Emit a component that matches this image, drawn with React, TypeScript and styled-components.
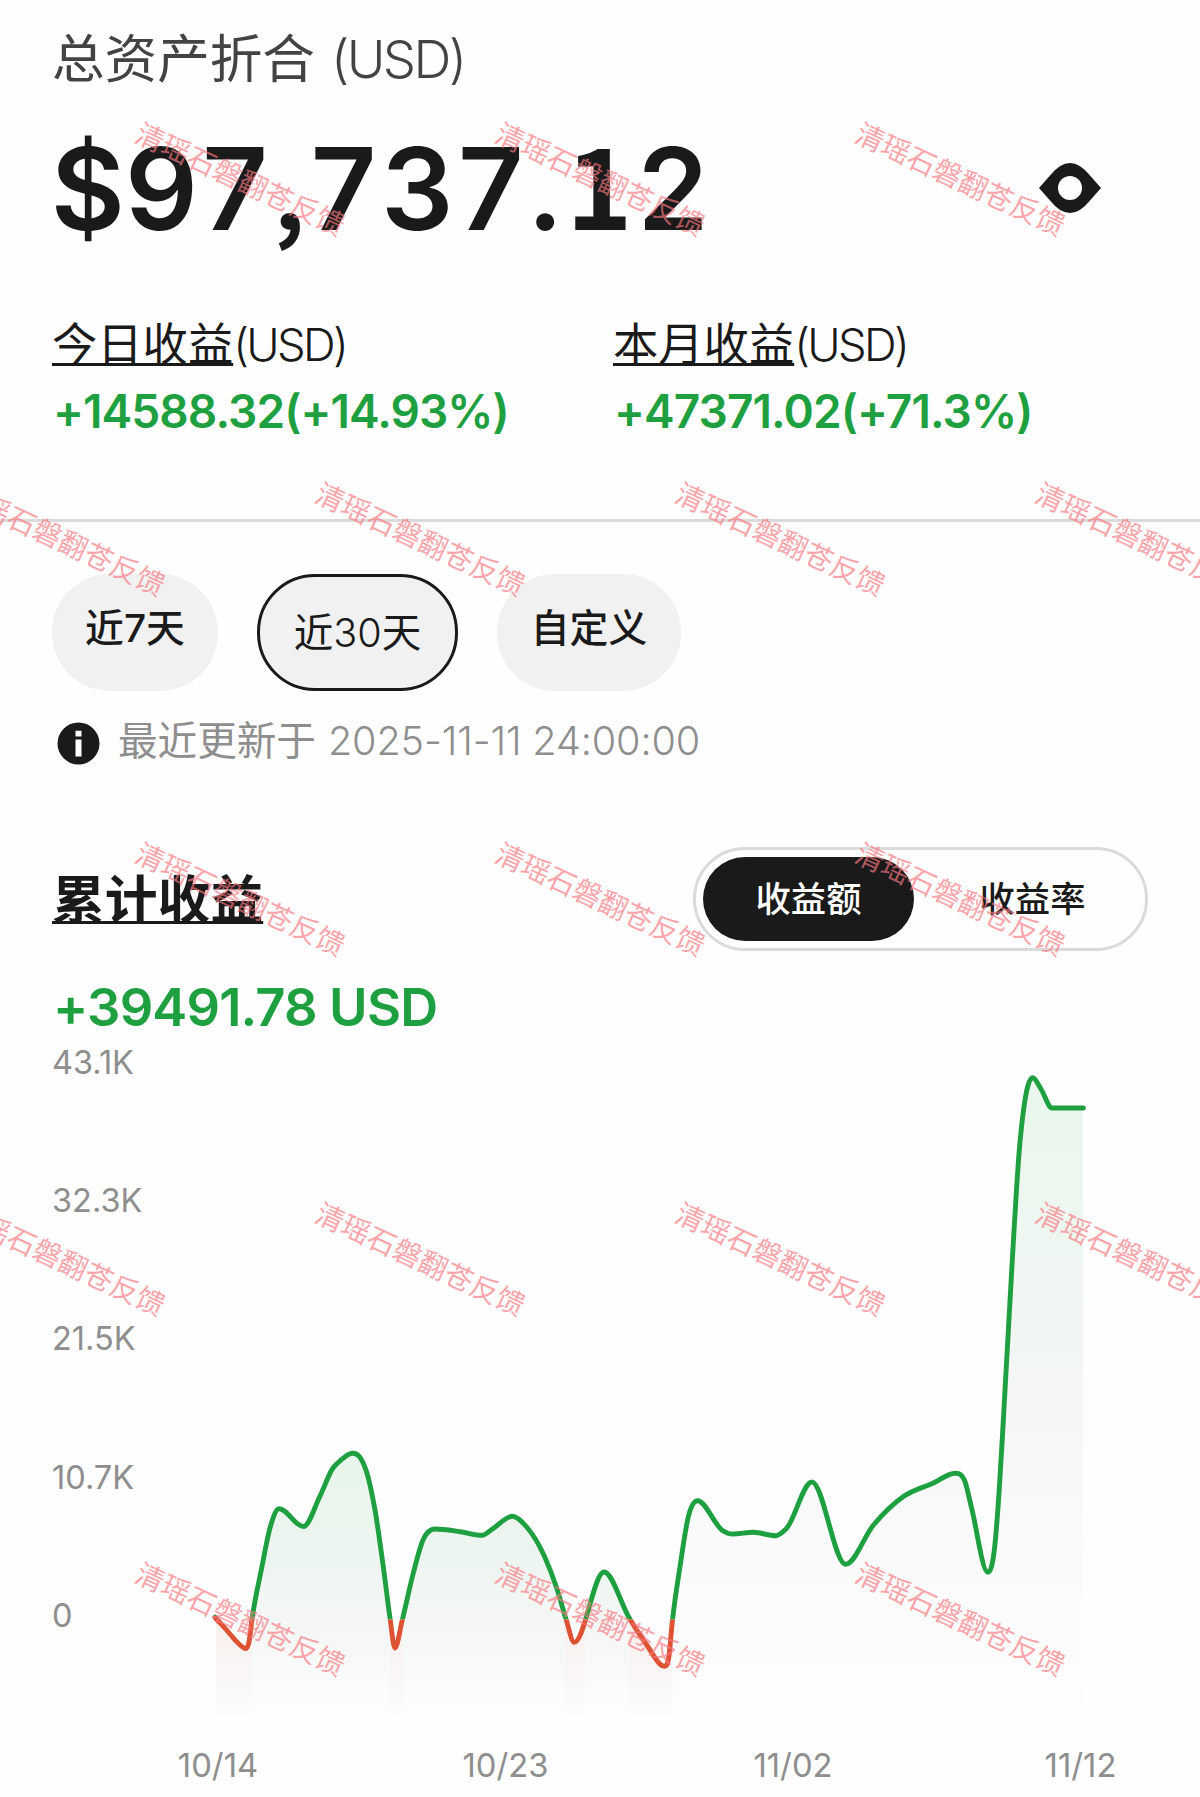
import React from 'react';
import styled, { createGlobalStyle } from 'styled-components';

const INK = '#1a1a1a';
const GREEN = '#1fa040';
const RED = '#dd5233';
const MUTED = '#8e8e8e';

const GlobalStyle = createGlobalStyle`
  * { box-sizing: border-box; }
  body {
    margin: 0;
    background: #fefefe;
    color: ${INK};
    font-family: Inter, "Noto Sans CJK SC", "Noto Sans", sans-serif;
  }
  button { font: inherit; color: inherit; }
`;

const Page = styled.main`
  position: relative;
  width: 1200px;
  height: 1797px;
  overflow: hidden;
  display: flex;
  flex-direction: column;
`;

const Latin = styled.span<{ $ls?: number; $w?: number; $ml?: number }>`
  letter-spacing: ${p => p.$ls ?? 0}px;
  font-weight: ${p => p.$w ?? 300};
  margin-left: ${p => p.$ml ?? 0}px;
`;

const Header = styled.header`
  padding: 23px 52px 0;
`;

const Title = styled.h1`
  margin: 0;
  height: 73px;
  line-height: 73px;
  font-size: 52.6px;
  font-weight: 400;
  color: #434343;
  white-space: nowrap;
`;

const BalanceRow = styled.div`
  display: flex;
  align-items: center;
  justify-content: space-between;
  height: 120px;
  margin-top: 32px;
  padding-right: 47px;
`;

const Balance = styled.div`
  display: flex;
  align-items: baseline;
  height: 120px;
  margin-left: -1px;
  padding-top: 1px;
  line-height: 120px;
  font-size: 114px;
  font-weight: 600;
`;

const Digit = styled.span<{ $narrow?: boolean; $altSize?: number }>`
  width: ${p => (p.$narrow ? 35 : 73.6)}px;
  display: flex;
  justify-content: center;
  ${p => p.$altSize && `font-family: "Noto Sans CJK SC", sans-serif; font-weight: 700; font-size: ${p.$altSize}px; line-height: 60px;`}
`;

const EyeButton = styled.button`
  display: flex;
  padding: 0;
  border: 0;
  background: none;
`;

const Stats = styled.section`
  display: grid;
  grid-template-columns: 561px 1fr;
  padding: 69px 52px 0;
  height: 271px;
`;

const StatLabel = styled.div`
  height: 55px;
  line-height: 55px;
  font-size: 45.3px;
  white-space: nowrap;
`;

const Underlined = styled.span`
  text-decoration: underline;
  text-decoration-thickness: 2.7px;
  text-underline-offset: 2px;
  text-decoration-skip-ink: none;
`;

const StatValue = styled.div`
  height: 54px;
  margin-top: 12px;
  padding-left: 1px;
  line-height: 54px;
  font-size: 46px;
  font-weight: 600;
  letter-spacing: -0.91px;
  color: ${GREEN};
  white-space: nowrap;
`;

const Divider = styled.hr`
  width: 100%;
  height: 3px;
  margin: 0;
  border: 0;
  background: #dadada;
`;

const Ranges = styled.nav`
  display: flex;
  gap: 39px;
  padding: 52px 52px 0;
`;

const RangeButton = styled.button<{ $active?: boolean; $width: number }>`
  width: ${p => p.$width}px;
  height: 117px;
  padding: ${p => (p.$active ? '0 0 7px' : '0 0 15px')};
  border: ${p => (p.$active ? `3px solid ${INK}` : '0')};
  border-radius: 58px;
  background: #f1f1f1;
  font-size: ${p => (p.$active ? 39.6 : 38.8)}px;
  font-weight: ${p => (p.$active ? 400 : 500)};
  white-space: nowrap;
`;

const Updated = styled.div`
  display: flex;
  align-items: center;
  height: 60px;
  margin-top: 20px;
  padding-left: 56.5px;
  font-size: 39.6px;
  line-height: 60px;
  color: ${MUTED};
  white-space: nowrap;
  svg { margin: 4px 18.5px 0 0; }
`;

const SectionHead = styled.div`
  display: flex;
  justify-content: space-between;
  height: 104px;
  margin-top: 76px;
  padding: 0 52px;
`;

const SectionTitle = styled.h2`
  margin: 18px 0 0;
  height: 70px;
  line-height: 70px;
  font-size: 52.8px;
  font-weight: 700;
  text-decoration: underline;
  text-decoration-thickness: 3px;
  text-underline-offset: 2px;
  text-decoration-skip-ink: none;
`;

const Toggle = styled.div`
  display: flex;
  width: 455px;
  padding: 7px 0 7px 7px;
  border: 3px solid #dadada;
  border-radius: 52px;
`;

const ToggleOption = styled.button<{ $active?: boolean }>`
  flex: ${p => (p.$active ? '0 0 211px' : '1')};
  height: 84px;
  padding: ${p => (p.$active ? '0 0 6px' : '0 0 6px 6px')};
  border: 0;
  border-radius: 43px;
  background: ${p => (p.$active ? INK : 'transparent')};
  color: ${p => (p.$active ? '#fff' : INK)};
  font-size: 35.3px;
  font-weight: 500;
`;

const Total = styled.div`
  height: 60px;
  margin-top: 26px;
  padding-left: 53px;
  line-height: 60px;
  font-size: 52.5px;
  font-weight: 600;
  letter-spacing: -0.85px;
  color: ${GREEN};
  white-space: nowrap;
`;

const ChartArea = styled.section`
  display: grid;
  grid-template-columns: 138px 1fr;
  height: 680px;
  margin-top: 5px;
  padding-left: 52px;
  color: ${MUTED};
  font-size: 32.5px;
`;

const YAxis = styled.div`
  display: flex;
  flex-direction: column;
  gap: 98.2px;
  padding-top: 1px;
  line-height: 40px;
`;

const XAxis = styled.div`
  display: flex;
  height: 40px;
  margin-top: 23px;
  line-height: 40px;
  font-size: 32.8px;
  color: ${MUTED};
`;

const XLabel = styled.span<{ $width: number }>`
  width: ${p => p.$width}px;
  text-align: center;
`;

const Watermarks = styled.div`
  position: absolute;
  inset: 0;
  overflow: hidden;
  pointer-events: none;
`;

const Mark = styled.span`
  position: absolute;
  width: 240px;
  height: 40px;
  margin: -21px 0 0 -118.5px;
  line-height: 40px;
  font-size: 28.4px;
  font-weight: 400;
  font-family: "Noto Sans CJK SC", sans-serif;
  text-align: center;
  white-space: nowrap;
  color: rgba(247, 120, 128, 0.68);
  transform: rotate(25deg);
`;

type Point = [number, number];

const CURVE: Point[] = [
  [215, 1617], [230, 1634], [238, 1643], [245.7, 1648.5], [249, 1642], [251.9, 1620], [261.7, 1568], [270, 1528], [279, 1508.7],
  [303.5, 1526.5], [320, 1496], [333, 1468], [341, 1460], [352.5, 1453.3], [360.5, 1458], [366, 1470],
  [375, 1510], [384, 1572], [390, 1618], [394.9, 1648], [402.3, 1620], [413.3, 1573], [423, 1540], [435, 1529],
  [460, 1531.7], [482, 1535.3], [493.3, 1528.3], [512.3, 1516.3], [526.7, 1527], [544.3, 1556], [556.7, 1588],
  [565.7, 1618], [574.3, 1642.3], [604, 1572], [629.3, 1618],
  [646.7, 1645], [664.3, 1666.3], [668.7, 1658], [672.3, 1621.7], [680, 1566.7], [688.5, 1516], [697.5, 1500.7],
  [723, 1530.8], [732.3, 1534], [753.7, 1532.3], [775.4, 1535.7], [786, 1529],
  [811.9, 1482], [845.6, 1564.3], [873.5, 1525], [903.1, 1496.8],
  [933, 1483.2], [955.1, 1473.2], [964.4, 1480], [971.6, 1508], [987.8, 1572.3], [994.7, 1546.7],
  [999.2, 1490], [1002.5, 1435], [1012.3, 1260], [1019.3, 1150], [1023.3, 1111.7], [1032.7, 1077.7],
  [1041, 1089], [1052, 1108], [1083.5, 1108],
];

/** Smooth cubic through the points, flat at every local extremum. */
function smoothPath(pts: Point[]): string {
  const n = pts.length;
  const w = pts.slice(1).map((p, i) => p[0] - pts[i][0]);
  const s = pts.slice(1).map((p, i) => (p[1] - pts[i][1]) / w[i]);
  const m = pts.map((_, i) => {
    if (i === 0) return s[0];
    if (i === n - 1) return s[n - 2];
    const a = s[i - 1];
    const b = s[i];
    if (a * b <= 0) return 0;
    const mean = (a * w[i] + b * w[i - 1]) / (w[i] + w[i - 1]);
    const limit = 3 * Math.min(Math.abs(a), Math.abs(b));
    return Math.sign(mean) * Math.min(Math.abs(mean), limit);
  });
  let d = `M${pts[0][0]} ${pts[0][1]}`;
  for (let i = 1; i < n; i++) {
    const [x0, y0] = pts[i - 1];
    const [x1, y1] = pts[i];
    const h = (x1 - x0) / 3;
    d += `C${x0 + h} ${y0 + m[i - 1] * h} ${x1 - h} ${y1 - m[i] * h} ${x1} ${y1}`;
  }
  return d;
}

const LINE = smoothPath(CURVE);
const AREA = `${LINE}V1713H215Z`;
const LOSS_SPANS: Point[] = [[216, 36], [390, 13], [565.5, 19], [629.5, 43]];

const Chart = () => (
  <svg width="1010" height="680" viewBox="190 1042 1010 680">
    <defs>
      <linearGradient id="gainEarly" gradientUnits="userSpaceOnUse" x1="0" y1="1453" x2="0" y2="1713">
        <stop offset="0" stopColor="#e6f5ea" />
        <stop offset="0.4" stopColor="#edf5f0" />
        <stop offset="0.72" stopColor="#f6f7f7" />
        <stop offset="1" stopColor="#fdfdfd" />
      </linearGradient>
      <linearGradient id="gainLate" gradientUnits="userSpaceOnUse" x1="0" y1="1078" x2="0" y2="1713">
        <stop offset="0" stopColor="#e9f7ec" />
        <stop offset="0.3" stopColor="#eff6f1" />
        <stop offset="0.56" stopColor="#f5f7f6" />
        <stop offset="0.82" stopColor="#fbfbfb" />
        <stop offset="1" stopColor="#fdfdfd" />
      </linearGradient>
      <linearGradient id="loss" gradientUnits="userSpaceOnUse" x1="0" y1="1619" x2="0" y2="1713">
        <stop offset="0" stopColor="#fcefec" />
        <stop offset="0.5" stopColor="#f8f5f4" />
        <stop offset="1" stopColor="#fcfcfc" />
      </linearGradient>
      <clipPath id="area"><path d={AREA} /></clipPath>
      <clipPath id="above"><rect x="190" y="1040" width="1010" height="579.5" /></clipPath>
      <clipPath id="below"><rect x="190" y="1619.5" width="1010" height="110" /></clipPath>
    </defs>
    <g clipPath="url(#area)">
      <rect x="216" y="1440" width="456.5" height="273" fill="url(#gainEarly)" />
      <rect x="672.5" y="1070" width="410.5" height="643" fill="url(#gainLate)" />
      {LOSS_SPANS.map(([x, w]) => (
        <rect key={x} x={x} y="1619" width={w} height="94" fill="url(#loss)" />
      ))}
    </g>
    <g fill="none" strokeWidth="4.9" strokeLinecap="round" strokeLinejoin="round">
      <path d={LINE} stroke={GREEN} clipPath="url(#above)" />
      <path d={LINE} stroke={RED} clipPath="url(#below)" />
      <path d="M215.5 1618L219 1621.8" stroke={RED} />
    </g>
  </svg>
);

const MARKS: Point[] = [179, 539, 899, 1259, 1619].flatMap((y, row) =>
  (row % 2 ? [59, 419, 779, 1139] : [239, 599, 959]).map((x): Point => [x, y]),
);

const ALT_SIZES: Record<string, number> = { '1': 113, ',': 96 };

export default function App() {
  return (
    <>
      <GlobalStyle />
      <Page>
        <Header>
          <Title>总资产折合<Latin $ml={16} $ls={-2.6}>(USD)</Latin></Title>
          <BalanceRow>
            <Balance>
              {'$97,737.12'.split('').map((c, i) => (
                <Digit key={i} $narrow={c === ',' || c === '.'} $altSize={ALT_SIZES[c]}>{c}</Digit>
              ))}
            </Balance>
            <EyeButton aria-label="显示">
              <svg width="62" height="50" viewBox="0 0 62 50">
                <path
                  fillRule="evenodd"
                  fill={INK}
                  d="M0 25L11 12.5Q21 0 31 0Q41 0 51 12.5L62 25L51 37.5Q41 50 31 50Q21 50 11 37.5ZM31 13a12 12 0 1 0 0 24a12 12 0 1 0 0-24Z"
                />
              </svg>
            </EyeButton>
          </BalanceRow>
        </Header>
        <Stats>
          <div>
            <StatLabel><Underlined>今日收益</Underlined><Latin $ls={-2.6}>(USD)</Latin></StatLabel>
            <StatValue>+14588.32(+14.93%)</StatValue>
          </div>
          <div>
            <StatLabel><Underlined>本月收益</Underlined><Latin $ls={-2.6}>(USD)</Latin></StatLabel>
            <StatValue>+47371.02(+71.3%)</StatValue>
          </div>
        </Stats>
        <Divider />
        <Ranges>
          <RangeButton $width={166}>近<Latin $w={500}>7</Latin>天</RangeButton>
          <RangeButton $width={201} $active>近<Latin>30</Latin>天</RangeButton>
          <RangeButton $width={184}>自定义</RangeButton>
        </Ranges>
        <Updated>
          <svg width="43" height="43" viewBox="0 0 43 43">
            <circle cx="21.5" cy="21.5" r="21" fill={INK} />
            <path d="M18.5 8.8h6v5.6h-6zM18.5 17.5h6v17h-6z" fill="#fff" />
          </svg>
          最近更新于<Latin $ml={12} $ls={-0.12}>2025-11-11 24:00:00</Latin>
        </Updated>
        <SectionHead>
          <SectionTitle>累计收益</SectionTitle>
          <Toggle>
            <ToggleOption $active>收益额</ToggleOption>
            <ToggleOption>收益率</ToggleOption>
          </Toggle>
        </SectionHead>
        <Total>+39491.78 USD</Total>
        <ChartArea>
          <YAxis>
            {['43.1K', '32.3K', '21.5K', '10.7K', '0'].map(v => <span key={v}>{v}</span>)}
          </YAxis>
          <Chart />
        </ChartArea>
        <XAxis>
          <XLabel $width={436}>10/14</XLabel>
          <XLabel $width={139}>10/23</XLabel>
          <XLabel $width={436}>11/02</XLabel>
          <XLabel $width={139}>11/12</XLabel>
        </XAxis>
        <Watermarks aria-hidden>
          {MARKS.map(([x, y]) => (
            <Mark key={`${x}-${y}`} style={{ left: x, top: y }}>清瑶石磐翻苍反馈</Mark>
          ))}
        </Watermarks>
      </Page>
    </>
  );
}
